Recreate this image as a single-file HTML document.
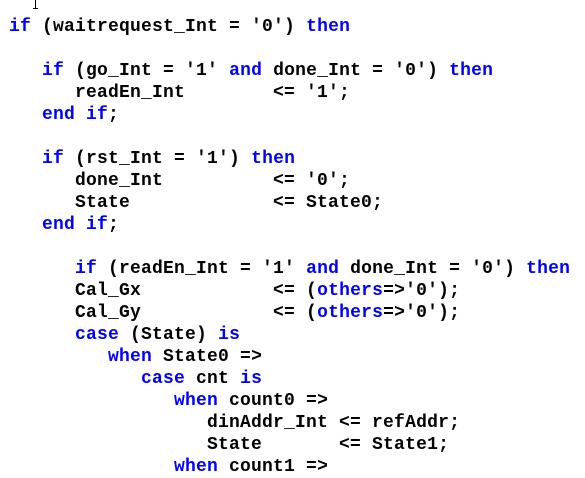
<!DOCTYPE html>
<html><head><style>
html,body{margin:0;padding:0;background:#fff;width:585px;height:477px;overflow:hidden;}
pre{margin:0;position:absolute;left:9px;top:16px;font-family:"Liberation Mono",monospace;font-weight:bold;font-size:18px;letter-spacing:0.2px;line-height:22px;color:#000;}
b{color:#0000ff;font-weight:bold;}
.cur{position:absolute;left:35px;top:0;width:1px;height:9px;background:#000;}
.cur:before{content:"";position:absolute;left:-2px;top:8px;width:5px;height:1px;background:#000;}
</style></head><body>
<div class="cur"></div>
<pre><b>if</b> (waitrequest_Int = '0') <b>then</b>

   <b>if</b> (go_Int = '1' <b>and</b> done_Int = '0') <b>then</b>
      readEn_Int        &lt;= '1';
   <b>end if</b>;

   <b>if</b> (rst_Int = '1') <b>then</b>
      done_Int          &lt;= '0';
      State             &lt;= State0;
   <b>end if</b>;

      <b>if</b> (readEn_Int = '1' <b>and</b> done_Int = '0') <b>then</b>
      Cal_Gx            &lt;= (<b>others</b>=&gt;'0');
      Cal_Gy            &lt;= (<b>others</b>=&gt;'0');
      <b>case</b> (State) <b>is</b>
         <b>when</b> State0 =&gt;
            <b>case</b> cnt <b>is</b>
               <b>when</b> count0 =&gt;
                  dinAddr_Int &lt;= refAddr;
                  State       &lt;= State1;
               <b>when</b> count1 =&gt;</pre>
</body></html>
